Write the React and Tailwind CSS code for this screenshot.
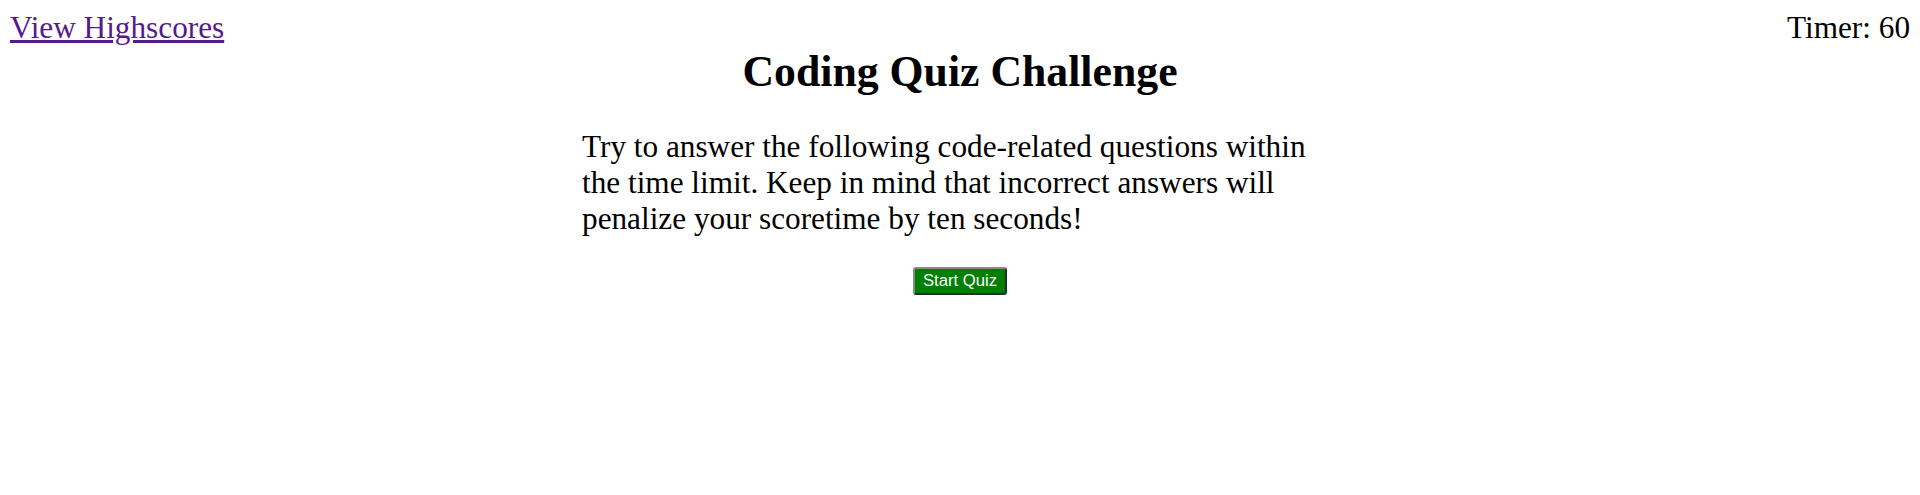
import React, { useState } from 'react';

// header row: highscores link + countdown
const TopBar = ({ seconds }) => (
  <header className="flex justify-between items-start px-[10px] pt-[10px] text-[31.25px] leading-[normal]">
    <a href="#highscores" className="text-[#551a8b] underline">
      View Highscores
    </a>
    <span className="text-black">Timer: {seconds}</span>
  </header>
);

export default function App() {
  const [seconds] = useState(60);

  return (
    <div className="min-h-screen bg-white text-black font-['Liberation_Serif','Times_New_Roman',serif]">
      <TopBar seconds={seconds} />

      <main>
        <h1 className="text-center text-[43.75px] font-bold leading-[normal]">
          Coding Quiz Challenge
        </h1>

        <p className="w-[756px] mx-auto mt-[33px] text-[31.25px] leading-[normal]">
          Try to answer the following code-related questions within the time limit. Keep in mind
          that incorrect answers will penalize your scoretime by ten seconds!
        </p>

        <div className="flex justify-center mt-[30px]">
          <button
            type="button"
            className="bg-[#008000] text-white font-['Liberation_Sans',Arial,sans-serif] text-[16.67px] leading-[normal] px-[8px] py-[2px] rounded-[3px] border-2 border-t-[#8a8a8a] border-l-[#8a8a8a] border-r-[#2b2b2b] border-b-[#2b2b2b]"
          >
            Start Quiz
          </button>
        </div>
      </main>
    </div>
  );
}
